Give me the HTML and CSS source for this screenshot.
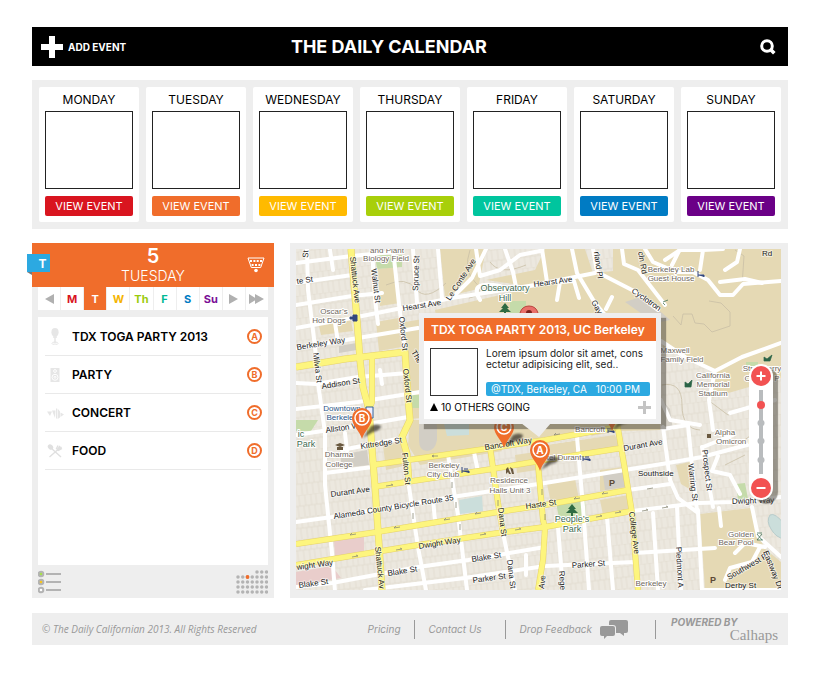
FILE: index.html
```html
<!DOCTYPE html>
<html lang="en">
<head>
<meta charset="utf-8">
<meta name="viewport" content="width=device-width, initial-scale=1">
<title>The Daily Calendar</title>
<link rel="stylesheet" href="styles.css">
</head>
<body>
<header class="topbar">
  <button class="add-event" type="button">
    <svg width="22" height="22" viewBox="0 0 22 22" aria-hidden="true"><path d="M8 0h6v8h8v6h-8v8H8v-8H0V8h8z" fill="#fff"/></svg>
    ADD EVENT
  </button>
  <h1 class="title">THE DAILY CALENDAR</h1>
  <button class="search" type="button" aria-label="Search">
    <svg width="16" height="16" viewBox="0 0 16 16" fill="none" stroke="#fff"><circle cx="7" cy="7" r="5.300" stroke-width="3"/><path d="M10 10l4.300 4.300" stroke-width="3.600"/></svg>
  </button>
</header>

<section class="week" aria-label="Week">
  <article class="day red"><h2>MONDAY</h2><div class="picture"></div><button type="button">VIEW EVENT</button></article>
  <article class="day orange"><h2>TUESDAY</h2><div class="picture"></div><button type="button">VIEW EVENT</button></article>
  <article class="day yellow"><h2>WEDNESDAY</h2><div class="picture"></div><button type="button">VIEW EVENT</button></article>
  <article class="day lime"><h2>THURSDAY</h2><div class="picture"></div><button type="button">VIEW EVENT</button></article>
  <article class="day teal"><h2>FRIDAY</h2><div class="picture"></div><button type="button">VIEW EVENT</button></article>
  <article class="day blue"><h2>SATURDAY</h2><div class="picture"></div><button type="button">VIEW EVENT</button></article>
  <article class="day purple"><h2>SUNDAY</h2><div class="picture"></div><button type="button">VIEW EVENT</button></article>
</section>

<main class="content">
  <section class="agenda">
    <header class="agenda-head">
      <span class="ribbon">T</span>
      <div class="date"><strong>5</strong><span>TUESDAY</span></div>
      <svg class="pong" width="18" height="16" viewBox="0 0 18 16" fill="#fff" aria-hidden="true">
        <path d="M1 1h16l-3.300 9.500H4.300z" fill="none" stroke="#fff"/>
        <path d="M3 3h2v2H3zm3.400 0h2v2h-2zm3.300 0h2v2h-2zM13 3h2v2h-2zM4.600 7h2v2h-2zM8 7h2v2H8zm3.400 0h2v2h-2z"/><circle cx="9" cy="13.500" r="1.800"/>
      </svg>
    </header>
    <nav class="tabs" aria-label="Days">
      <button type="button" aria-label="Previous"><svg width="9" height="10" viewBox="0 0 9 10"><path d="M9 0v10L0 5z"/></svg></button>
      <button type="button" class="c-red">M</button>
      <button type="button" class="current">T</button>
      <button type="button" class="c-yellow">W</button>
      <button type="button" class="c-lime">Th</button>
      <button type="button" class="c-teal">F</button>
      <button type="button" class="c-blue">S</button>
      <button type="button" class="c-purple">Su</button>
      <button type="button" aria-label="Next"><svg width="9" height="10" viewBox="0 0 9 10"><path d="M0 0v10l9-5z"/></svg></button>
      <button type="button" aria-label="Last"><svg width="15" height="10" viewBox="0 0 15 10"><path d="M0 0v10l8-5zM6 0v10l9-5z"/></svg></button>
    </nav>
    <ul class="events">
      <li>
        <svg width="18" height="18" viewBox="0 0 18 18" fill="#e6e6e6"><ellipse cx="9" cy="4.200" rx="3.600" ry="4.200"/><path d="M7 9h4M9 8v7" stroke="#e6e6e6" stroke-width="1.500"/><path d="M9 14q-3 0-3 1.500t3 .5q3 1 3-.5T9 14z" fill="none" stroke="#e6e6e6"/></svg>
        <a href="#a">TDX TOGA PARTY 2013</a><span class="mark">A</span>
      </li>
      <li>
        <svg width="18" height="18" viewBox="0 0 18 18"><path d="M4.500 2h9v14h-9z" fill="#e6e6e6"/><g fill="none" stroke="#fff"><circle cx="9" cy="5" r="1.400"/><circle cx="9" cy="11.300" r="3"/><circle cx="9" cy="11.300" r="1"/></g></svg>
        <a href="#b">PARTY</a><span class="mark">B</span>
      </li>
      <li>
        <svg width="18" height="18" viewBox="0 0 18 18" fill="#e6e6e6"><path d="M1 7.500h5L4 12zM6 6.500h3.500L9 14zM10 4l1 1v9.500h-1zM11.600 4.500l2.400 3v6l-2.400 1.500zM14.500 8.500L18 10.500l-3.500 2.500z"/></svg>
        <a href="#c">CONCERT</a><span class="mark">C</span>
      </li>
      <li>
        <svg width="18" height="18" viewBox="0 0 18 18" fill="none" stroke="#e0e0e0" stroke-width="1.400"><ellipse cx="4.500" cy="5" rx="1.600" ry="2.300" transform="rotate(-45 4.500 5)" fill="#e0e0e0"/><path d="M5 6l10 9M3.500 15L12 7.500M12 3.500l-1.500 3 2 2L16 6.500M14 4l-2 3M15.500 5l-3 3"/></svg>
        <a href="#d">FOOD</a><span class="mark">D</span>
      </li>
    </ul>
    <footer class="agenda-foot">
      <button type="button" aria-label="List view"><svg width="24" height="24" viewBox="0 0 24 24" stroke="#b3b3b3" stroke-width="2"><circle cx="3" cy="4" r="2.300" fill="#a6e04a"/><circle cx="3" cy="12" r="2.300" fill="#f7c51e"/><circle cx="3" cy="20" r="2.300" fill="#fff"/><path d="M8 4h15M8 12h15M8 20h15"/></svg></button>
      <button type="button" aria-label="Month view"><svg width="32" height="24" viewBox="0 0 32 24" fill="none" stroke="#b3b3b3" stroke-width="3.500" stroke-linecap="round"><path d="M21 2h10M2 7h29M2 12h29M2 17h29M2 22h29" stroke-dasharray="0 4.750"/><circle cx="11.500" cy="7" r="1.900" fill="#f06d2b" stroke="none"/></svg></button>
    </footer>
  </section>

  <section class="map-panel" aria-label="Event map">
    <svg class="map" viewBox="296 249 485 341" preserveAspectRatio="xMidYMid slice" role="img" aria-label="Street map of Berkeley">
      <defs>
        <pattern id="lots" width="17" height="22" patternUnits="userSpaceOnUse" patternTransform="rotate(-7)"><path d="M0 0H17M0 11H17M4 0V11M10 0V11M15 0V11M2 11V22M7 11V22M13 11V22" stroke="#ddd6c9" stroke-width=".6" fill="none"/></pattern>
        <filter id="soft"><feGaussianBlur stdDeviation="1"/></filter>
        <g id="pin"><path d="M1 20L9 8q6-3 10 0 0 4-8 6z" fill="#2e2a24" opacity=".7" filter="url(#soft)"/><path d="M0 21C-2 13-10 8-10 0a10 10 0 0 1 20 0C10 8 2 13 0 21z" fill="#f06d2b"/><circle r="7" fill="none" stroke="#fff" stroke-width="1.500"/></g>
        <path id="tree" d="M0-7l4 5H2l4 4H1v3h-2V2h-5l4-4h-2z" fill="#2f6b43"/>
      </defs>
      <path fill="#ece8df" d="M296 249h485v341H296z"/>
      <path fill="url(#lots)" d="M296 249h485v341H296z"/>
      <g fill="#e5d9b4">
        <path d="M378 269l16-2 6 36-20 3zM440 249h46l-8 40-33 8zM486 280l49-10 10-21h236v226l-40-10-22-45-8-20 2-30-50-22V340H440l-5-30 100-23zM405 322l30-5v100l-26 2zM376 322l28-5 3 29-28 5zM410 420h250v10l-40 1-200 34-12-20z"/>
        <path d="M545 445l70-10 5 12-70 11zM547 484l28-5 4 20-28 4zM600 470l22-3 6 20-28 4zM600 500l28-5 3 15-28 5zM700 514l50-6 14 40 17 14v28h-76zM318 322l32-6 3 15-32 4zM676 465l18-4 2 32-15-9zM383 445l22-4 3 24-22 5zM515 455l20-3 2 18-20 3z"/>
      </g>
      <path fill="#ece8df" d="M711 398l70-20v118l-60 4zM585 249h28v22l-20 2z"/>
      <path fill="url(#lots)" d="M711 398l70-20v118l-60 4zM585 249h28v22l-20 2z"/>
      <path fill="#ece8df" d="M500 444l90-14 2 8-90 14zM330 440l20-3v12l-18 3z"/>
      <path fill="url(#lots)" d="M500 444l90-14 2 8-90 14z"/>
      <path fill="#c5dbaa" d="M375 255h27v12l-25 2zM510 301h16v14h-16zM556 503l29-5 1 25-25 4zM736 484l9-1 3 16-10 1zM296 420h22l-7 11h-15zM410 395h12v13h-12zM746 362h12v10h-12z"/>
      <path fill="#e9cdcb" d="M334 540l30-5v18l-29 4zM296 572l36-6 9 12-45 8z"/>
      <path fill="#cbdedb" d="M459 500l23-4 1 15-23 3zM443 420h26v15l-22 1z"/>
      <path fill="#cbdedb" stroke="#b8cccb" d="M770 515q5-3 15 10v14q-9-1-14-10-5-8-1-14z"/>
      <path fill="#d2cec5" d="M419 430q0-18 9-18t9 18v10q-2 11-10 11t-8-11zM340 455l27-5 2 15-27 3zM603 475l20-3 2 15-20 3zM339 346l18-3v7l-18 3zM625 302l18-6 27 24-15 3zM661 399l9 10 3 21h-12z"/>

      <g fill="none" stroke="#c9bfa6" stroke-width=".8">
        <path d="M673 316l8 9 2-11h9l3 9 9 1 8 8 18-6 0-14-9-9-12-2M662 385q20-4 20 20t18 25M470 250q-7 20 5 32t-6 16M735 250l9 6-2 30M490 262q10 14 36 3M386 285q20-9 30 4t30-6"/>
        <path d="M720 440q12 12 30-4M725 465l20-10M708 400l20 15 30-12"/>
      </g>

      <g fill="none" stroke="#fff" stroke-width="4" stroke-linejoin="round" stroke-linecap="round">
        <path d="M307 249l1 41 7 57 3 36 7 50v52l7 68 3 39M372 249l3 50 3 25M393 249l6 55 6 48M413 249l4 54M438 249l4 49M330 250l3 20M335 323l3 19M380 370l2 14M345 433l2 18"/>
        <path d="M296 263l56-7 41-4M296 283l56-8M296 305l56-9 30-3M296 328l56-10 50-10 50-10 83-13 60-12M296 348l56-9 66-11M296 383l20 1 42-7 50-4M296 409l62-7 62-10M296 435l66-10 46-8M342 450l60-12M325 473l48-6"/>
        <path d="M296 522l36-5 120-20 93-14 123-20 34-6 60-16M296 587l36-4 86-16 50-7 77-13M365 590l100-12 80-12 90-4M635 553l80-5M628 490l42-6M632 511l66-8 34-1 49-5"/>
        <path d="M409 487l9 60 8 43M448 455l10 60 9 75M503 533l12 57M474 452l4 20M433 500l2 20M526 555v20M577 437l6 70 6 83M558 527l5 63M607 517l6 73M653 513l5 77M677 507l4 83M698 510l4 80"/>
        <path d="M663 427l7 53 8 18 20 15M663 429l25-4 5 50 4 35M702 447l11 60M719 508l2 18M661 400l9 20 30 5M703 447l30-12M718 456l-6 15 18 4 10 19M752 507l6 29 23 21M725 580l5-12 22-6 8-15M702 590h79M765 547l-20-4-10 10"/>
        <path d="M486 249l-14 29-20 20M476 249l4 27 20-6 20-15 20-4M505 249l8 23 3 15M542 249l5 33M572 249l5 24 18 30 10 12M593 249l4 23 35 18 26 20M622 249l2 15 14 6 10 13 17 22M645 249l8 13 23 10 17 0 15 8 12 15h13l10-11 38-3M665 260l15-10h22M700 270l3-20 20-1M725 270l12-8 3-13M480 300q-12-20 20-14M557 300l3-18 14-1 5 17M606 309l6-12"/>
        <path d="M661 341l24 16 30 14 27-14 39-14M715 371l-6 29 4 30M730 413l45-13M680 249l-8 16M720 282l25-3 17 4"/>
      </g>

      <g fill="none" stroke-linejoin="round">
        <g stroke="#e6d269">
          <path stroke-width="7" d="M351 249l6 71 3 40 3 27 6 23 6 77 3 43 4 60M296 381l49-9 2-12M296 381l49-22 60-7 3 45 2 23-8 17 5 17 2 30" opacity="0"/>
          <path stroke-width="7" d="M351 249l6 71 3 40 3 27 6 23 6 77 3 43 4 60M296 367l49-8 60-7 3 45 2 23-8 17 5 17 2 30"/>
          <path stroke-width="6" d="M372 358v44l-3 8M373 465l119-17 53-8 73-13M373 487l119-18 53-9 77-12M296 544l81-12 121-20 47-7 83-15M296 565l122-20 80-12 47-6 87-16M490 447l8 56 5 30M538 464l5 56 2 8-2 32-5 30M617 423l8 47 7 43 6 77"/>
        </g>
        <g stroke="#fdf57e">
          <path stroke-width="6" d="M351 249l6 71 3 40 3 27 6 23 6 77 3 43 4 60M296 367l49-8 60-7 3 45 2 23-8 17 5 17 2 30"/>
          <path stroke-width="5" d="M372 358v44l-3 8M373 465l119-17 53-8 73-13M373 487l119-18 53-9 77-12M296 544l81-12 121-20 47-7 83-15M296 565l122-20 80-12 47-6 87-16M490 447l8 56 5 30M538 464l5 56 2 8-2 32-5 30M617 423l8 47 7 43 6 77"/>
        </g>
      </g>
      <g stroke="#8c8a77" stroke-width=".8" fill="none">
        <path d="M432 456h6m-6 0l2-1m-2 1l2 1M386 486l7-1-2-1M350 535l6-1m-6 1l2-2M394 528l6-1m-6 1l2-2M444 520l6-1m-6 1l2-2M475 514l6-1m-6 1l2-2M352 557l6-1-2-1M396 550l6-1-2-1M480 535l6-1-2-1M515 530l6-1-2-1M554 435l6-1m-6 1l2-2M574 499l6-1m-6 1l2-2M602 494l6-1m-6 1l2-2M596 517l6-1-2-1M615 513l6-1-2-1M642 511l6-1-2-1M662 508l6-1-2-1M647 489l6-1M452 488v-6M456 508v-6M460 530v-6M413 513v6M542 495v-6M545 520v-6M498 500v6"/>
      </g>

      <g class="streets">
        <text transform="translate(350 257) rotate(84)">Shattuck Ave</text>
        <text transform="translate(375 547) rotate(84)">Shattuck Av</text>
        <text transform="translate(371 269) rotate(83)">Walnut St</text>
        <text transform="translate(418 291) rotate(-88)">Spruce St</text>
        <text transform="translate(450 301) rotate(-57)">Le Conte Ave</text>
        <text transform="translate(403 311) rotate(-9)">Hearst Ave</text>
        <text transform="translate(534 287) rotate(-8)">Hearst Ave</text>
        <text transform="translate(399 317) rotate(84)">Oxford St</text>
        <text transform="translate(403 369) rotate(84)">Oxford St</text>
        <text transform="translate(297 284) rotate(-8)">te St</text>
        <text transform="translate(297 350) rotate(-9)">Berkeley Way</text>
        <text transform="translate(313 353) rotate(83)">Milvia St</text>
        <text transform="translate(322 389) rotate(-9)">Addison St</text>
        <text transform="translate(326 433) rotate(-9)">Allston Way</text>
        <text transform="translate(361 449) rotate(-9)">Kittredge St</text>
        <text transform="translate(402 453) rotate(84)">Fulton St</text>
        <text transform="translate(331 497) rotate(-8)">Durant Ave</text>
        <text transform="translate(334 519) rotate(-9)">Alameda County Bicycle Route 35</text>
        <text transform="translate(297 570) rotate(-8)">wight Way</text>
        <text transform="translate(419 549) rotate(-9)">Dwight Way</text>
        <text transform="translate(299 588) rotate(-8)">Blake St</text>
        <text transform="translate(388 576) rotate(-9)">Blake St</text>
        <text transform="translate(472 562) rotate(-9)">Blake St</text>
        <text transform="translate(473 583) rotate(-8)">Parker St</text>
        <text transform="translate(572 568) rotate(-4)">Parker St</text>
        <text transform="translate(485 450) rotate(-9)">Bancroft Way</text>
        <text transform="translate(526 509) rotate(-8)">Haste St</text>
        <text transform="translate(498 508) rotate(83)">Dana St</text>
        <text transform="translate(507 560) rotate(83)">Dana St</text>
        <text transform="translate(544 589) rotate(-83)">Ave</text>
        <text transform="translate(559 571) rotate(86)">Rege</text>
        <text transform="translate(629 512) rotate(83)">College Ave</text>
        <text transform="translate(624 451) rotate(-10)">Durant Ave</text>
        <text transform="translate(638 476)">Southside</text>
        <text transform="translate(688 464) rotate(83)">Warring St</text>
        <text transform="translate(702 450) rotate(83)">Prospect St</text>
        <text transform="translate(676 547) rotate(87)">Piedmont A</text>
        <text transform="translate(732 504) rotate(-2)">Dwight Way</text>
        <text transform="translate(729 580) rotate(-30)">Southwest Pl</text>
        <text transform="translate(763 552) rotate(68)">Eastway Dr</text>
        <text transform="translate(725 588)">Derby St</text>
        <text transform="translate(631 292) rotate(35)">Cyclotron</text>
        <text transform="translate(594 252) rotate(82)">rland Pl</text>
        <text transform="translate(638 252) rotate(80)">cln Rd</text>
        <text transform="translate(591 302) rotate(60)">Gay</text>
        <text transform="translate(762 256)">Rd</text>
        <text transform="translate(308 258) rotate(-86)">St</text>
        <text transform="translate(411 352) rotate(60)">The</text>
      </g>
      <g class="places">
        <text x="387" y="253">and Plant</text><text x="386" y="261">Biology Field</text>
        <text x="334" y="314">Oscar’s</text><text x="329" y="323">Hot Dogs</text>
        <text x="671" y="272">Berkeley Lab</text><text x="671" y="281">Guest House</text>
        <text x="675" y="353">Maxwell</text><text x="682" y="362">Family Field</text>
        <text x="713" y="378">California</text><text x="713" y="387">Memorial</text><text x="713" y="396">Stadium</text>
        <text x="762" y="371">Strawberry</text><text x="762" y="381">Canyon P</text>
        <text x="339" y="457">Dharma</text><text x="339" y="467">College</text>
        <text x="444" y="468">Berkeley</text><text x="443" y="477">City Club</text>
        <text x="509" y="483">Residence</text><text x="510" y="493">Halls Unit 3</text>
        <text x="590" y="432">Bancroft</text><text x="559" y="460">Hotel Durant</text>
        <text x="725" y="435">Alpha</text><text x="735" y="444">Omicron P</text>
        <text x="741" y="537">Golden</text><text x="736" y="545">Bear Pool</text>
        <text x="651" y="586">Berkeley</text>
      </g>
      <g class="places greenish">
        <text x="505" y="291">Observatory</text><text x="505" y="301">Hill</text>
        <text x="572" y="522">People’s</text><text x="572" y="532">Park</text>
        <text x="306" y="447">Park</text><text x="301" y="437">ic</text>
      </g>
      <g class="places bluish"><text x="342" y="411">Downtown</text><text x="342" y="420">Berkeley</text></g>
      <use href="#tree" x="505" y="310"/><use href="#tree" x="572" y="511"/>
      <path fill="#69583f" d="M335 445l5-2 5 2-5 2zM337 447h6v3h-6zM506 474v-5l2-2 1 3 2 4h-2l-1-2zM510 467l3 2 1 5h-2zM707 434h4v4h-4z"/>
      <path d="M353 315h4v6h-4zM350 317h3v2h-3zM462 467v6m0-2h7v2m-5-4h4M608 428v5m0-2h6v2m-5-4h4M583 456v5m0-2h7v2m-5-4h4M698 271v6m0-2h6v2" fill="#33477f" stroke="#33477f"/>
      <path d="M685 382l3 2 4-4-1 7h-6zM764 357l3 2 5-4-2 6h-6zM663 302l5-2M665 305l-2-2M757 534l5 6m0-6l-5 6m0-7h5m-5 7h6" fill="#2c6447" stroke="#2c6447" stroke-width=".7"/>
      <g class="parking"><text x="612" y="486">P</text><text x="713" y="583">P</text></g>
      <path d="M366 407h7v11h-7z" fill="#eef" stroke="#33619a"/>

      <path d="M528 335l-5-13q-4-4-3-9 2-7 9-7t9 7q0 5-4 9z" fill="#e9706a" stroke="#b8403b"/><circle cx="529" cy="313" r="3" fill="#7e221e"/>
      <g class="pin-letter">
        <use href="#pin" x="362" y="418"/><text x="362" y="422">B</text>
        <use href="#pin" x="504" y="427"/><text x="504" y="431">C</text>
        <use href="#pin" x="612" y="410"/>
        <use href="#pin" x="540" y="450"/><text x="540" y="454">A</text>
      </g>
    </svg>

    <article class="popup">
      <h3>TDX TOGA PARTY 2013, UC Berkeley</h3>
      <div class="popup-body">
        <div class="thumb"></div>
        <div class="detail">
          <p>Lorem ipsum dolor sit amet, cons<br>ectetur adipisicing elit, sed..</p>
          <div class="where"><span>@TDX, Berkeley, CA</span><span>10:00 PM</span></div>
        </div>
      </div>
      <div class="popup-foot">
        <span><svg width="8" height="8" viewBox="0 0 8 8"><path d="M4 0l4 8H0z"/></svg> 10 OTHERS GOING</span>
        <button type="button" aria-label="Join event"><svg width="13" height="13" viewBox="0 0 13 13"><path d="M5 0h3v5h5v3H8v5H5V8H0V5h5z" fill="#c4c4c4"/></svg></button>
      </div>
    </article>

    <div class="zoom">
      <button type="button" aria-label="Zoom in"><svg width="20" height="20" viewBox="0 0 20 20"><path d="M10 5.500v9M5.500 10h9" stroke="#fff" stroke-width="2"/></svg></button>
      <input type="range" min="0" max="100" value="86" aria-label="Zoom level">
      <button type="button" aria-label="Zoom out"><svg width="20" height="20" viewBox="0 0 20 20"><path d="M5.500 10h9" stroke="#fff" stroke-width="2"/></svg></button>
    </div>
  </section>
</main>

<footer class="footer">
  <p class="copyright">© The Daily Californian 2013. All Rights Reserved</p>
  <nav class="links">
    <a href="#pricing">Pricing</a>
    <a href="#contact">Contact Us</a>
    <a href="#feedback">Drop Feedback
      <svg width="28" height="19" viewBox="0 0 28 19" fill="#999"><path d="M11 0h15q2 0 2 2v9q0 2-2 2h-2v3l-4-3h-4V8q0-3-3-3H9V2q0-2 2-2z"/><path d="M2 6h11q2 0 2 2v6q0 2-2 2H7l-3 3v-3H2q-2 0-2-2V8q0-2 2-2z"/></svg>
    </a>
  </nav>
  <p class="powered"><strong>POWERED BY</strong><span>Calhaps</span></p>
</footer>
</body>
</html>
```
FILE: styles.css
```css
* { box-sizing: border-box; }

body {
  margin: 0;
  padding: 27px 32px;
  background: #fff;
  color: #000;
  font: 12px/16px Inter, "Liberation Sans", sans-serif;
}

h1, h2, h3, p, ul { margin: 0; padding: 0; font-weight: 400; }
button { border: 0; padding: 0; background: none; color: inherit; font: inherit; cursor: pointer; }
a { color: inherit; text-decoration: none; }
svg { display: block; }

.topbar {
  display: grid;
  grid-template-columns: 34% auto 1fr;
  align-items: center;
  height: 39px;
  padding: 0 12px 0 9px;
  background: #000;
  color: #fff;
}
.add-event { display: flex; align-items: center; gap: 5px; font-size: 10px; font-weight: 700; }
.title { font-size: 18px; line-height: 24px; font-weight: 700; }
.search { justify-self: end; }

.week {
  display: grid;
  grid-template-columns: repeat(7, 1fr);
  gap: 7px;
  margin-top: 14px;
  padding: 7px;
  background: #eee;
}
.day { padding: 5px 6px 6px; border-radius: 2px; background: #fff; text-align: center; }
.day h2 { font-size: 12px; line-height: 16px; }
.picture { height: 78px; margin: 3px 0 7px; border: 1px solid #222; }
.day button {
  width: 100%;
  height: 20px;
  border-radius: 2px;
  color: #fff;
  font-size: 11px;
}
.red button { background: #d9151f; }
.orange button { background: #f06d2b; }
.yellow button { background: #ffba00; }
.lime button { background: #a8cf0a; }
.teal button { background: #00c59e; }
.blue button { background: #007bc3; }
.purple button { background: #6b0087; }

.content {
  display: grid;
  grid-template-columns: 242px 1fr;
  gap: 16px;
  margin-top: 14px;
}

.agenda { display: flex; flex-direction: column; background: #eee; }
.agenda-head {
  position: relative;
  display: flex;
  justify-content: center;
  height: 44px;
  background: #f06d2b;
  color: #fff;
}
.ribbon {
  position: absolute;
  left: -5px;
  top: 11px;
  width: 23px;
  height: 18px;
  padding-left: 8px;
  background: #2ca9e1;
  font-size: 12px;
  line-height: 20px;
  font-weight: 700;
  text-align: center;
}
.ribbon::after {
  content: "";
  position: absolute;
  left: 0;
  top: 100%;
  border-top: 3px solid #777;
  border-left: 5px solid transparent;
}
.date { display: flex; flex-direction: column; align-items: center; padding-top: 1px; }
.date strong { font-size: 20px; line-height: 24px; font-weight: 600; }
.date span { font-size: 14px; line-height: 16px; font-weight: 300; }
.pong { position: absolute; right: 9px; top: 14px; }

.tabs {
  display: grid;
  grid-template-columns: repeat(10, 1fr);
  gap: 1px;
  margin: 0 6px;
}
.tabs button {
  display: flex;
  align-items: center;
  justify-content: center;
  height: 23px;
  background: #fff;
  font-size: 11px;
  font-weight: 700;
}
.tabs svg { fill: #b0b0b0; }
.tabs .current { background: #f06d2b; color: #fff; }
.c-red { color: #d9151f; }
.c-yellow { color: #f5b400; }
.c-lime { color: #9acb0c; }
.c-teal { color: #00b995; }
.c-blue { color: #007bc3; }
.c-purple { color: #7a0e96; }
.tabs .c-red { color: #d9151f; }

.events {
  flex: 1;
  margin: 7px 6px 0;
  padding: 1px 7px;
  background: #fff;
  list-style: none;
}
.events li {
  display: flex;
  align-items: center;
  height: 38px;
  padding-left: 1px;
  border-bottom: 1px solid #e9e9e9;
}
.events a { flex: 1; margin-left: 8px; font-weight: 600; }
.mark {
  width: 15px;
  height: 15px;
  border: 2px solid #f06d2b;
  border-radius: 50%;
  box-sizing: content-box;
  width: 11px;
  height: 11px;
  margin-right: -1px;
  color: #f06d2b;
  font-size: 9px;
  line-height: 11px;
  font-weight: 700;
  text-align: center;
}
.agenda-foot { display: flex; justify-content: space-between; height: 33px; padding: 5px 6px 4px; }

.map-panel { position: relative; padding: 6px 7px 8px 6px; background: #eee; }
.map { width: 100%; height: 341px; }
.map text { font-family: "Liberation Sans", Arial, sans-serif; font-size: 8px; paint-order: stroke; stroke: #fff; stroke-width: 2px; stroke-linejoin: round; }
.map .streets text { fill: #222; stroke-opacity: 0.5; }
.map .places text { fill: #6f675c; text-anchor: middle; }
.map .greenish text { fill: #3f6b50; font-size: 9px; }
.map .bluish text { fill: #2c5486; }
.map .parking text { fill: #5d4a35; font-weight: 700; text-anchor: middle; stroke: none; font-size: 9px; }
.map .pin-letter text { fill: #fff; stroke: none; font-family: Inter, sans-serif; font-weight: 700; font-size: 10px; text-anchor: middle; }

.popup {
  position: absolute;
  left: 129px;
  top: 70px;
  width: 242px;
  border: 5px solid #eee;
  background: #fff;
  box-shadow: 5px 5px 1px rgba(70, 65, 55, 0.5);
}
.popup::after {
  content: "";
  position: absolute;
  left: 97px;
  top: 100%;
  width: 30px;
  height: 14px;
  margin-top: 4px;
  background: #eee;
  clip-path: polygon(0 0, 100% 0, 60% 100%);
}
.popup h3 { padding: 4px 7px 3px; background: #f06d2b; color: #fff; font-size: 12px; line-height: 16px; font-weight: 600; }
.popup-body { display: flex; gap: 8px; padding: 7px 6px 0; }
.thumb { width: 48px; height: 48px; border: 1px solid #333; }
.detail { flex: 1; display: flex; flex-direction: column; justify-content: space-between; }
.detail p { font-size: 10px; line-height: 11px; color: #222; white-space: nowrap; }
.where {
  display: flex;
  gap: 9px;
  padding: 0 5px;
  border-radius: 2px;
  background: #2ca9e1;
  color: #fff;
  font-size: 10px;
  line-height: 14px;
  white-space: nowrap;
}
.popup-foot { display: flex; align-items: center; justify-content: space-between; padding: 3px 5px 4px 6px; font-size: 10px; }
.popup-foot span { display: flex; align-items: center; gap: 3px; }

.zoom {
  position: absolute;
  right: 15px;
  top: 121px;
  display: flex;
  flex-direction: column;
  align-items: center;
  gap: 4px;
  padding: 2px;
  border-radius: 12px;
  background: #fff;
  box-shadow: 5px 4px 1px rgba(70, 65, 55, 0.5);
}
.zoom button { width: 20px; height: 20px; border-radius: 50%; background: #f25252; }
.zoom input {
  appearance: none;
  writing-mode: vertical-lr;
  direction: rtl;
  width: 8px;
  height: 84px;
  margin: 0;
  background:
    radial-gradient(circle at 4px 33px, #b9bcbe 3px, transparent 4px),
    radial-gradient(circle at 4px 51px, #b9bcbe 3px, transparent 4px),
    radial-gradient(circle at 4px 70px, #b9bcbe 3px, transparent 4px),
    linear-gradient(90deg, transparent 2px, #b9bcbe 2px, #b9bcbe 6px, transparent 6px);
}
.zoom input::-webkit-slider-thumb { appearance: none; width: 8px; height: 8px; border-radius: 50%; background: #f25252; }

.footer {
  display: flex;
  align-items: center;
  height: 32px;
  margin-top: 15px;
  padding: 0 10px;
  background: #eee;
  color: #999;
  font-size: 10px;
  font-style: italic;
}
.copyright { font-family: "Open Sans", sans-serif; }
.links { display: flex; margin-left: auto; }
.links a { display: flex; align-items: center; gap: 8px; height: 19px; padding: 0 13px; border-right: 1px solid #999; }
.links a:nth-child(3) { padding-right: 27px; }
.links a:nth-child(2) { padding-right: 23px; }
.links a + a { padding-left: 14px; }
.powered { display: flex; flex-direction: column; width: 122px; padding-left: 15px; }
.powered strong { line-height: 12px; font-weight: 700; }
.powered span { align-self: flex-end; font: 15px/14px "Liberation Serif", serif; }
```
